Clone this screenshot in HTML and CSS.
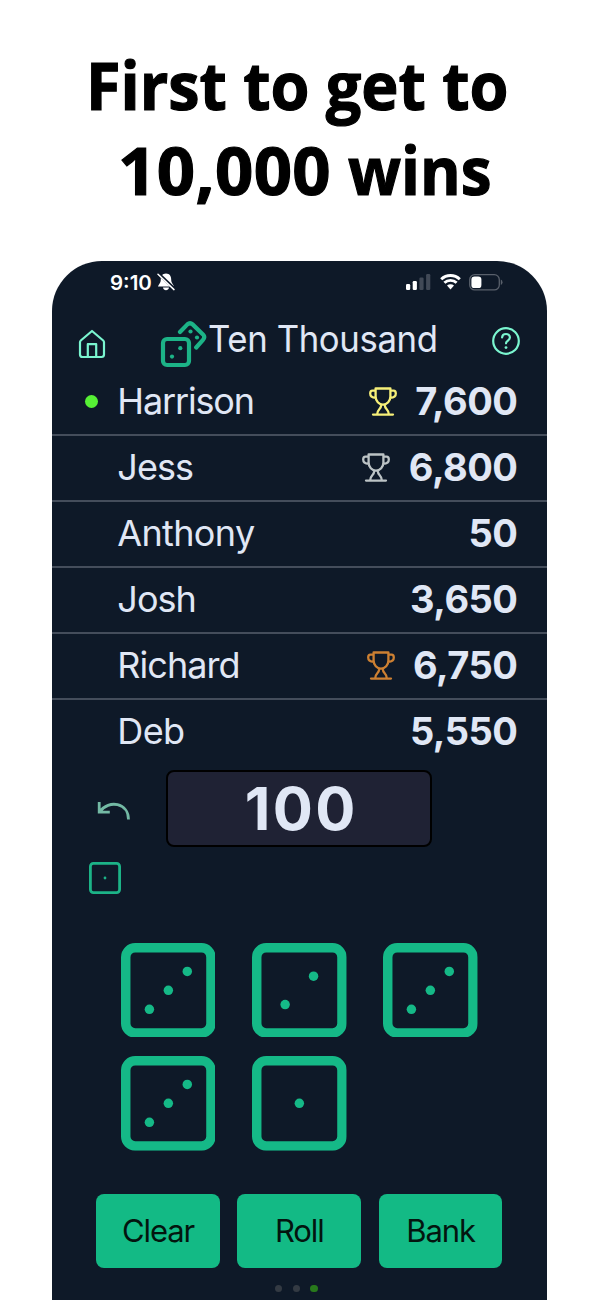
FILE: index.html
```
<!DOCTYPE html>
<html lang="en">
<head>
<meta charset="utf-8">
<title>Ten Thousand</title>
<link rel="stylesheet" href="styles.css">
</head>
<body>
<svg class="defs" aria-hidden="true">
  <symbol id="trophy" viewBox="0 0 28 29"><g fill="none" stroke="currentColor" stroke-width="2.3" stroke-linecap="round" stroke-linejoin="round"><path d="M6.6 1.5H21.4V9.5C21.4 14 18 17.6 14 17.6S6.6 14 6.6 9.5ZM6.3 3.6H3.4C1.8 3.6 1.2 4.8 1.2 6.5C1.2 9 3.2 10.8 6.8 10.8M21.7 3.6h2.9C26.2 3.6 26.8 4.8 26.8 6.5C26.8 9 24.8 10.8 21.2 10.8M12.2 18C12.2 22.5 8.2 22 8.2 27.2M15.8 18c0 4.5 4 4 4 9.2M4 27.6H24"/></g></symbol>
  <symbol id="die" viewBox="2 2 20 20"><rect x="3" y="3" width="18" height="18" rx="2" fill="none" stroke="currentColor" stroke-width="2"/></symbol>
</svg>
<h1 class="headline"><span class="line first">First to get to</span><span class="line second"><span class="goal">10,000</span> <span class="wins">wins</span></span></h1>
<main class="phone">
  <div class="status">
    <span class="time">9:10</span>
    <svg class="bell" viewBox="0 0 18 18"><path d="M9 .6C5.3 .6 3.8 3.5 3.8 6.5C3.8 10 2 11 1 13.4H17C16 11 14.2 10 14.2 6.5C14.2 3.5 12.7 .6 9 .6ZM6 14.6H12C11.6 18.1 6.4 18.1 6 14.6Z" fill="#fff"/><path d="M1.7 .8L17.7 16" stroke="#0e1928" stroke-width="3"/><path d="M1 1.2L17 16.6" stroke="#fff" stroke-width="1.5" stroke-linecap="round"/></svg>
    <svg class="signal" viewBox="0 0 25 16"><g fill="#fff"><rect x="0" y="10" width="4.2" height="6" rx="1.2"/><rect x="6.7" y="7" width="4.2" height="9" rx="1.2"/></g><g fill="#414956"><rect x="13.4" y="3.5" width="4.2" height="12.5" rx="1.2"/><rect x="20.1" y="0" width="4.2" height="16" rx="1.2"/></g></svg>
    <svg class="wifi" viewBox="0 0 21 16"><g fill="none" stroke="#fff" stroke-width="2.9"><path d="M1.2 5.2C6.4 .2 14.6 .2 19.8 5.2M4.4 8.8C7.8 5.5 13.2 5.5 16.6 8.8"/></g><path d="M7 11.5C9 9.8 12 9.8 14 11.5L10.5 15.5Z" fill="#fff"/></svg>
    <svg class="battery" viewBox="0 0 34 17"><rect x=".7" y=".7" width="29.6" height="15.2" rx="5" fill="none" stroke="#59606b" stroke-width="1.3"/><rect x="2.4" y="2.5" width="10" height="11.6" rx="3.2" fill="#fff"/><path d="M31.8 5.6Q33.5 6.4 33.5 8.3T31.8 11Z" fill="#59606b"/></svg>
  </div>
  <header class="bar">
    <svg class="home" viewBox="0 0 28 30"><g fill="none" stroke="currentColor" stroke-width="2.2" stroke-linecap="round" stroke-linejoin="round"><path d="M14 2L25.2 11.5Q26 12.2 26 13.2V25.5Q26 28 23.5 28H4.5Q2 28 2 25.5V13.2Q2 12.2 2.8 11.5ZM9.8 28V15.2H18.2V28"/></g></svg>
    <svg class="logo" viewBox="0 0 48 48"><g fill="none" stroke="#1cb387" stroke-width="4.2" stroke-linecap="round" stroke-linejoin="round"><rect x="3" y="19" width="26" height="26" rx="4"/><path d="M20 12L27.4 4.4Q30 2 32.6 4.4L43 14.4Q45.5 17 43 19.8L36.2 27.5"/></g><g fill="#1cb387"><circle cx="12" cy="36.6" r="2.1"/><circle cx="20.3" cy="28.2" r="2.1"/><circle cx="30.5" cy="11.5" r="2.1"/><circle cx="37" cy="17.5" r="2.1"/></g></svg>
    <span class="name">Ten Thousand</span>
    <svg class="help" viewBox="0 0 28 28"><g fill="none" stroke="currentColor" stroke-width="2.2" stroke-linecap="round"><circle cx="14" cy="14" r="12.8"/><path d="M10.1 10.4C10.3 8 12 7 14 7S17.9 8.3 17.9 10.6C17.9 13.4 14 13.6 14 16.3"/></g><circle cx="14" cy="20.6" r="1.4" fill="currentColor"/></svg>
  </header>
  <section class="players">
    <div class="row"><i class="turn"></i><span class="player harrison">Harrison</span><svg class="cup gold"><use href="#trophy"/></svg><b class="score">7,600</b></div>
    <div class="row"><span class="player">Jess</span><svg class="cup silver"><use href="#trophy"/></svg><b class="score">6,800</b></div>
    <div class="row"><span class="player anthony">Anthony</span><b class="score">50</b></div>
    <div class="row"><span class="player">Josh</span><b class="score">3,650</b></div>
    <div class="row"><span class="player">Richard</span><svg class="cup bronze"><use href="#trophy"/></svg><b class="score">6,750</b></div>
    <div class="row"><span class="player anthony">Deb</span><b class="score">5,550</b></div>
  </section>
  <section class="turn-total">
    <svg class="undo" viewBox="0 0 34 22"><path d="M2.2 2V12.2H12.8M2.5 12C12 -1 31.5 3 31.5 19.5" fill="none" stroke="#73b9a4" stroke-width="2.8"/></svg>
    <output class="total">100</output>
  </section>
  <svg class="held" viewBox="0 0 32 32"><rect x="1.4" y="1.4" width="29.2" height="29.2" rx="3" fill="none" stroke="#1cb387" stroke-width="2.8"/><circle cx="16" cy="16" r="1.4" fill="#1cb387"/></svg>
  <section class="dice">
    <svg viewBox="2 2 20 20"><use href="#die" x="2" y="2" width="20" height="20"/><g fill="currentColor"><circle cx="16" cy="8" r="1"/><circle cx="12" cy="12" r="1"/><circle cx="8" cy="16" r="1"/></g></svg>
    <svg viewBox="2 2 20 20"><use href="#die" x="2" y="2" width="20" height="20"/><g fill="currentColor"><circle cx="15" cy="9" r="1"/><circle cx="9" cy="15" r="1"/></g></svg>
    <svg viewBox="2 2 20 20"><use href="#die" x="2" y="2" width="20" height="20"/><g fill="currentColor"><circle cx="16" cy="8" r="1"/><circle cx="12" cy="12" r="1"/><circle cx="8" cy="16" r="1"/></g></svg>
    <svg viewBox="2 2 20 20"><use href="#die" x="2" y="2" width="20" height="20"/><g fill="currentColor"><circle cx="16" cy="8" r="1"/><circle cx="12" cy="12" r="1"/><circle cx="8" cy="16" r="1"/></g></svg>
    <svg viewBox="2 2 20 20"><use href="#die" x="2" y="2" width="20" height="20"/><circle cx="12" cy="12" r="1" fill="currentColor"/></svg>
  </section>
  <nav class="actions"><button>Clear</button><button>Roll</button><button>Bank</button></nav>
  <div class="pager"><i></i><i></i><i class="on"></i></div>
</main>
</body>
</html>
```
FILE: styles.css
```
* { box-sizing: border-box; }
body { margin: 0; height: 1300px; overflow: hidden; background: #fff; font-family: Inter, "Liberation Sans", sans-serif; }
svg { display: block; flex: none; }
.defs { display: none; }
.headline { margin: 0; height: 261px; padding-top: 41.5px; font: 700 67px/85px "Open Sans", "Noto Sans", sans-serif; color: #000; -webkit-text-stroke: 1.2px #000; }
.line { display: block; width: max-content; white-space: nowrap; }
.first { margin-left: 86px; transform: scaleX(.939); transform-origin: left; }
.second { margin-left: 118px; }
.goal { letter-spacing: .4px; }
.wins { display: inline-block; transform: scaleX(.925); transform-origin: left; }
.phone { width: 495.5px; height: 1039px; margin-left: 51.5px; background: #0e1928; border-radius: 50px 50px 0 0; color: #e0e7f5; overflow: hidden; }
.status { display: flex; align-items: center; height: 42px; padding-left: 58.5px; color: #fff; }
.time { width: 46.5px; font-size: 20.5px; font-weight: 600; letter-spacing: 0; }
.bell { width: 18px; height: 18px; }
.signal { width: 25px; height: 16px; margin-left: 231.5px; }
.wifi { width: 21px; height: 16px; margin-left: 8.5px; }
.battery { width: 34px; height: 17px; margin-left: 8.5px; }
.bar { display: flex; height: 66.5px; padding: 15px 27px 0 26.5px; color: #7af5cf; }
.home { width: 28px; height: 30px; margin-top: 11px; }
.logo { width: 48px; height: 48px; margin: 2px 0 0 54px; }
.name { width: 243px; margin-left: 0; font-size: 37px; line-height: 42px; letter-spacing: -.4px; color: #e0e7f5; white-space: nowrap; transform: scaleX(.938); transform-origin: left; }
.help { width: 28px; height: 28px; margin: 9px 0 0 auto; }
.row { display: flex; align-items: center; height: 66px; padding: 0 29.5px 2px 65.8px; border-bottom: 2px solid #444d5b; }
.row:last-child { border-bottom-color: transparent; }
.turn { width: 13px; height: 13px; margin: 1px 19px 0 -32px; border-radius: 50%; background: #56f035; }
.player { margin-right: auto; font-size: 36px; letter-spacing: -.95px; }
.harrison { letter-spacing: -1.15px; }
.anthony { letter-spacing: -.65px; }
.cup { width: 28px; height: 29px; margin: 1px 18.5px 0 0; }
.gold { color: #f6ef78; }
.silver { color: #bcc3c5; }
.bronze { color: #cd8032; }
.score { font-size: 38px; font-weight: 700; letter-spacing: -.5px; }
.turn-total { display: flex; align-items: center; height: 77px; margin-top: 4.5px; }
.undo { width: 34px; height: 22px; margin: 5px 35.5px 0 45px; }
.total { display: block; width: 265.5px; height: 77px; border: 2.5px solid #000; border-radius: 8px; background: #1f2234; font-size: 59.5px; font-weight: 700; line-height: 72px; letter-spacing: 2.4px; padding-left: 5px; text-align: center; }
.held { width: 32px; height: 32px; margin: 15px 0 0 37.8px; }
.dice { display: grid; grid-template-columns: repeat(3, 94.7px); gap: 19.3px 36.5px; margin: 48.5px 0 0 69.3px; color: #15b987; }
.dice svg { width: 94.7px; height: 94.7px; }
.actions { display: flex; gap: 17.5px; margin: 43px 0 0 44.8px; }
.actions button { width: 123.7px; height: 73.5px; padding: 0; border: 0; border-radius: 8px; background: #13ba85; color: #03150f; font: 400 31px/73.5px Inter, sans-serif; letter-spacing: -1.1px; }
.pager { display: flex; gap: 10.5px; justify-content: center; margin: 17.5px 0 0 -6px; }
.pager i { width: 7.3px; height: 7.3px; border-radius: 50%; background: #333a43; }
.pager .on { background: #28791c; }
```
